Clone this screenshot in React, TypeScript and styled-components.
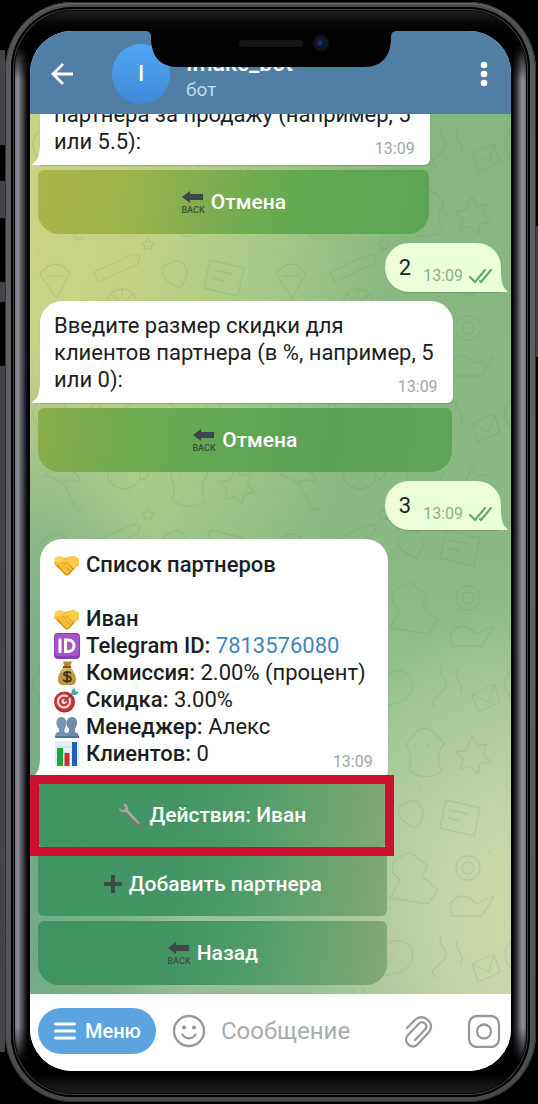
import React from "react";
import styled, { createGlobalStyle } from "styled-components";

const GlobalStyle = createGlobalStyle`
  *, *::before, *::after { box-sizing: border-box; }
  body {
    margin: 0;
    background: #000;
    font-family: Roboto, "Noto Sans", sans-serif;
    color: #1c1e20;
  }
  button, input { font: inherit; }
  svg { display: block; flex: none; }
`;

/* ---------- Phone body ---------- */

const Page = styled.div`
  position: relative;
  height: 100vh;
  min-height: 900px;
  padding: 2px 2px 2px 5px;
`;

const SideKey = styled.span<{ $top: number; $height: number; $right?: boolean; $slot?: boolean }>`
  position: absolute;
  top: ${(p) => p.$top}px;
  height: ${(p) => p.$height}px;
  width: ${(p) => (p.$right ? 3 : 5)}px;
  ${(p) => (p.$right ? "right: 0;" : "left: 0;")}
  background: ${(p) => (p.$slot ? "#020202" : "#434446")};
  border-radius: 1px;
`;

const Rim = styled.div`
  position: relative;
  height: 100%;
  padding: 5px 6px;
  border-radius: 68px;
  background: linear-gradient(to bottom, #4b4b4d 0, #5c5c60 80px, #626266 50%, #545458 calc(100% - 80px), #48484a 100%);
  box-shadow: inset 0 0 0 1px #2f3032, inset 0 2px 1px #77777a;
`;

const Band = styled.div`
  height: 100%;
  padding: 4px;
  border-radius: 62px;
  background: #060607;
  box-shadow: inset 0 0 0 2px #000, inset 0 0 0 3px #3d3e42, inset 0 0 0 4px #050506;
`;

const Bezel = styled.div`
  height: 100%;
  padding: 20px 15px 22px;
  border-radius: 58px;
  background:
    linear-gradient(to bottom, #1d1e20 0, #08080a 12px, #000 20px, #000 34px, transparent 70px),
    linear-gradient(to top, #1b1c1e 0, #111 10px, #000 20px, #000 30px, transparent 66px),
    linear-gradient(to right, #77787f 0, #8e9098 3px, #6d6e75 5px, #34353a 9px, #0a0a0b 12px, #000 14px, #000 calc(100% - 14px), #0a0a0b calc(100% - 13px), #3a3b40 calc(100% - 9px), #6f7077 calc(100% - 6px), #93949b calc(100% - 3px), #6a6b70 100%);
`;

const Screen = styled.main`
  position: relative;
  display: flex;
  flex-direction: column;
  height: 100%;
  overflow: hidden;
  border-radius: 42px;
  background: #fff;
`;

const NotchArea = styled.div`
  position: absolute;
  top: 0;
  left: 0;
  right: 0;
  display: flex;
  justify-content: center;
  pointer-events: none;
`;

/* ---------- Header ---------- */

const Header = styled.header`
  display: flex;
  align-items: center;
  flex: none;
  height: 83px;
  padding: 2px 19px 0 20px;
  background: #507ea5;
  color: #fff;
`;

const IconButton = styled.button`
  padding: 0;
  border: 0;
  background: none;
  color: inherit;
  cursor: pointer;
`;

const Avatar = styled.div`
  display: grid;
  place-items: center;
  width: 58px;
  height: 60px;
  margin: 0 16px 0 38px;
  border-radius: 50%;
  background: linear-gradient(#50a7f3, #3f89d8);
  font-size: 22px;
  font-weight: 500;
`;

const Identity = styled.div`
  flex: 1;
  padding-top: 6px;
`;

const BotName = styled.h1`
  margin: 0;
  font-size: 23px;
  line-height: 26px;
  font-weight: 500;
`;

const BotStatus = styled.p`
  margin: 0;
  font-size: 19px;
  line-height: 26px;
  color: #bcdcf2;
`;

/* ---------- Chat ---------- */

const Chat = styled.section`
  position: relative;
  display: flex;
  flex: 1;
  flex-direction: column;
  justify-content: flex-end;
  gap: 9px;
  min-height: 0;
  padding: 0 9px 9px 8px;
  overflow: hidden;
  background:
    radial-gradient(ellipse 46% 36% at 102% 92%, #ced8aa 0, rgba(206, 216, 170, 0.8) 35%, rgba(206, 216, 170, 0) 100%),
    radial-gradient(ellipse 34% 60% at 0 88%, #74ab84 0, rgba(116, 171, 132, 0.8) 50%, rgba(116, 171, 132, 0) 100%),
    radial-gradient(ellipse 82% 58% at -4% 12%, #ccd483 0, #c3d186 35%, rgba(180, 208, 142, 0.75) 62%, rgba(165, 200, 140, 0) 100%),
    linear-gradient(#85b67e 0, #88ba82 50%, #9fc898 82%, #98c096 100%);
`;

const Doodles = styled.svg`
  position: absolute;
  inset: 0;
  width: 100%;
  height: 100%;
`;

const Group = styled.div`
  position: relative;
  display: flex;
  flex: none;
  flex-direction: column;
  gap: 5px;
  width: fit-content;
`;

const Incoming = styled.article`
  position: relative;
  display: flex;
  flex-direction: column;
  margin-left: 2px;
  padding: 11px 19px 10px 14px;
  border-radius: 22px 22px 6px 0;
  background: #fff;
  box-shadow: 0 1px 1px rgba(70, 110, 60, 0.35);
  font-size: 22px;
  line-height: 27px;
  white-space: nowrap;
`;

const IncomingTail = styled.svg`
  position: absolute;
  left: -8px;
  bottom: 0;
`;

const Line = styled.p`
  display: flex;
  align-items: center;
  gap: 6px;
  min-height: 27px;
  margin: 0;

  b { font-weight: 500; }
`;

const ReportBody = styled.div`
  padding: 1px 3px 1px 0;
`;

const ProfileLink = styled.a`
  color: #3d87bd;
  text-decoration: none;
`;

const Time = styled.time`
  font-size: 16px;
  line-height: 20px;
  color: #a3a5a7;
`;

const IncomingTime = styled(Time)`
  align-self: flex-end;
  margin: -16px -4px -4px 0;
`;

const Outgoing = styled.article`
  position: relative;
  display: flex;
  flex: none;
  align-items: center;
  align-self: flex-end;
  height: 49px;
  margin-right: 1px;
  padding: 0 9px 0 14px;
  border-radius: 24px 24px 4px 24px;
  background: #ecfed8;
  box-shadow: 0 1px 1px rgba(70, 110, 60, 0.35);
  font-size: 22px;
`;

const OutgoingMeta = styled.span`
  display: flex;
  align-items: center;
  gap: 6px;
  margin: 16px 0 0 12px;

  time { color: #86b57c; }
`;

const OutgoingTail = styled.svg`
  position: absolute;
  right: -7px;
  bottom: 0;
`;

const tones = {
  olive: "linear-gradient(100deg, #abb54a 0, #9bb34b 25%, #7cad4f 45%, #62a951 66%, #5ea456 100%)",
  leaf: "linear-gradient(100deg, #8aad4a 0, #6fab50 22%, #62a854 42%, #5ba055 70%, #60a45a 100%)",
  forest: "linear-gradient(100deg, #3f9461 0, #439664 40%, #4f9c68 60%, #68a36d 80%, #83a974 100%)",
};

const KeyboardButton = styled.button<{ $tone: keyof typeof tones; $last?: boolean }>`
  display: flex;
  align-items: center;
  justify-content: center;
  gap: 6px;
  width: calc(100% - 1px);
  height: 64px;
  padding: 0;
  border: 0;
  border-radius: ${(p) => (p.$last ? "6px 6px 21px 21px" : "6px")};
  background: ${(p) => tones[p.$tone]};
  color: #fff;
  font-size: 21px;
  font-weight: 500;
  cursor: pointer;
`;

const Highlighted = styled.div`
  position: relative;

  &::after {
    content: "";
    position: absolute;
    inset: -8px -6px -9px -8px;
    border: 9px solid #cd1030;
    pointer-events: none;
  }
`;

/* ---------- Composer ---------- */

const Composer = styled.form`
  display: flex;
  align-items: center;
  flex: none;
  height: 77px;
  padding: 0 10px 3px 8px;
  background: #fff;
  color: #96999c;
`;

const MenuButton = styled.button`
  display: flex;
  align-items: center;
  gap: 9px;
  height: 46px;
  margin-right: 16px;
  padding: 0 15px 0 16px;
  border: 0;
  border-radius: 23px;
  background: #5ba4df;
  color: #fff;
  font-size: 20px;
  font-weight: 500;
  cursor: pointer;
`;

const MessageInput = styled.input`
  flex: 1;
  min-width: 0;
  margin: 0 12px 0 15px;
  padding: 0;
  border: 0;
  outline: 0;
  background: none;
  font-size: 24px;

  &::placeholder { color: #a9abad; opacity: 1; }
`;

const ComposerActions = styled.div`
  display: flex;
  gap: 33px;
`;

/* ---------- Drawings ---------- */

const Handshake = () => (
  <svg width="26" height="26" viewBox="0 0 26 26" aria-hidden="true">
    <path d="M1 6 6 4l4 2 4-1 6-1 5 3v6l-4 3-6 6c-1 1-3 1-4 0l-7-6-4-4z" fill="#f6bd35" />
    <path d="M1 6 6 4l4 2-3 5-6-1z" fill="#ffd15a" />
    <path d="M14 6 9 10c0 2 3 2 5 0l7 6 4-3V7l-5-3z" fill="#fccb48" />
    <path d="m3 13 8 9c1 1 3 1 4 0l5-6" fill="none" stroke="#d98c1c" strokeWidth="1.3" />
    <path d="m12 15 4 4m-1-6 4 4M9 10c0 2 3 2 5 0" fill="none" stroke="#dc9824" strokeWidth="1" />
  </svg>
);

const IdBadge = () => (
  <svg width="26" height="26" viewBox="0 0 26 26" aria-hidden="true">
    <rect width="26" height="26" rx="4" fill="#8a3fae" />
    <rect x="1" y="1" width="24" height="22" rx="4" fill="#a855cc" />
    <path d="M6 5.500V20M11.500 7v11.500H14c8 0 8-11.500 0-11.500z" fill="none" stroke="#fff" strokeWidth="3" />
  </svg>
);

const MoneyBag = () => (
  <svg width="26" height="26" viewBox="0 0 26 26" aria-hidden="true">
    <path d="M9 2c2-2 3 1 4-1 1 2 3-1 5 1l-3 6h-4z" fill="#b28a35" />
    <path d="M10 7h6c3 3 6 8 6 13 0 3-2 5-5 5H9c-3 0-5-2-5-5 0-5 3-10 6-13z" fill="#bd973f" />
    <path d="M10 7h6c2 2 3 4 4 7-5-4-9-4-14 0 1-3 2-5 4-7z" fill="#d3b05b" />
    <path d="M9 7h8" stroke="#7b5a1c" strokeWidth="2" />
    <path d="M17 13c-3-2-7-1-7 1 0 3 7 1 7 5 0 3-5 3-8 1M13 11v12" fill="none" stroke="#40351c" strokeWidth="1.700" />
  </svg>
);

const Target = () => (
  <svg width="26" height="26" viewBox="0 0 26 26" aria-hidden="true">
    <circle cx="10.500" cy="15" r="10.500" fill="#b52a30" />
    <circle cx="10" cy="14.500" r="9" fill="#d8383c" />
    <circle cx="10" cy="14.500" r="7" fill="#f6e8e6" />
    <circle cx="10" cy="14.500" r="5" fill="#d23438" />
    <circle cx="10" cy="14.500" r="2.500" fill="#f4e3e0" />
    <path d="M10 14.500 19 6" stroke="#7a3238" strokeWidth="1.600" />
    <path d="m17 8 1-5 3-2v3l4 1-3 3z" fill="#4da8a6" />
  </svg>
);

const Busts = () => (
  <svg width="26" height="26" viewBox="0 0 26 26" aria-hidden="true">
    <path d="M11 24c0-4 1-5 4-6v-3c-5-6-2-12 3-12s7 6 3 12v3c3 1 4 2 4 6z" fill="#6c8ca8" />
    <path d="M1 24c0-4 1-6 4-6v-3C0 9 3 3 7.500 3s7 6 3 12v3c3 1 4 2 4 6z" fill="#7595b1" />
    <path d="M1 22h24v2H1z" fill="#527390" />
  </svg>
);

const BarChart = () => (
  <svg width="26" height="26" viewBox="0 0 26 26" aria-hidden="true">
    <path d="M1 0h24v25H1z" fill="#e6eef5" />
    <path d="M1 6h24M1 12h24M1 18h24" stroke="#cbd9e4" />
    <path d="M3 7h6v18H3z" fill="#19a83a" />
    <path d="M10.500 12h5v13h-5z" fill="#c82c31" />
    <path d="M18 1h5v24h-5z" fill="#2162b8" />
  </svg>
);

const Wrench = () => (
  <svg width="25" height="25" viewBox="0 0 25 25" aria-hidden="true">
    <path d="M5 1c3-1 6 2 5 6l13 14c1 2-1 4-3 3L7 10C3 11 0 8 1 5l4 2 2-2z" fill="#747a73" />
    <path d="M5 1c3-1 6 2 5 6l12 13-2 1L8 9C4 10 1 8 1 5l4 2.500L7.500 5z" fill="#a4aaa2" />
  </svg>
);

const Plus = () => (
  <svg width="20" height="20" viewBox="0 0 20 20" aria-hidden="true">
    <path d="M10 1v18M1 10h18" stroke="#3f4944" strokeWidth="4" />
  </svg>
);

const BackMark = () => (
  <svg width="24" height="24" viewBox="0 0 24 24" aria-hidden="true">
    <path d="M1 7 9 1v3h13v6H9v3z" fill="#3e4649" />
    <text x="12" y="23" textAnchor="middle" fontFamily="Roboto, sans-serif" fontSize="9" fill="#3e4c45">BACK</text>
  </svg>
);

const Checks = () => (
  <svg width="23" height="16" viewBox="0 0 23 16" fill="none" stroke="#57a860" strokeWidth="2" strokeLinecap="round" aria-hidden="true">
    <path d="m1 9 5 5L16 2M11 13l1 1L22 2" />
  </svg>
);

const Doodle = () => (
  <Doodles aria-hidden="true">
    <defs>
      <pattern id="doodles" width="236" height="270" patternUnits="userSpaceOnUse">
        <g fill="none" stroke="#47804a" strokeOpacity="0.15" strokeWidth="1.300" strokeLinejoin="round">
          <circle cx="20" cy="30" r="17" />
          <path d="M12 34q8 9 17-1M14 25v2m10-3v2" />
          <path d="m66 16 4 8 9 1-6 6 2 9-9-4-8 4 1-9-6-6 9-1z" />
          <path d="M98 44c-12-20 8-34 24-24 12-10 32 4 22 20-8 12-36 16-46 4zM112 30v2m14-2v2m-10 6q5 3 9-1" />
          <path d="M176 12c-8 8 10 14 2 24s-16 8-8 18m22-38c-8 8 10 14 2 24" />
          <path d="m206 40 22-10 6 18-22 10zM206 40l17 8 5-18" />
          <path d="M14 92c14-14 34-8 36 6-10-4-14-2-18 2-6-6-12-8-18-8zM33 99l12 24q4 6 8 0" />
          <path d="M78 80h32v16q-16 18-32 0zM110 84q12-2 8 8-2 4-10 4M86 72q4-4 0-8m10 8q4-4 0-8" />
          <path d="M140 92q18-34 38-2-10 12-2 28-20 10-34-2 6-12-2-24zM150 90v3m12-3v3" />
          <path d="m206 82 5 10 10-2-4 10 8 8-11 2-2 10-8-8-10 4 3-11-8-7 11-2z" />
          <path d="M10 160q16-20 30 0l-14 24zM16 162h18M104 140l-40 18 4 10 40-18 2-8z" />
          <circle cx="92" cy="190" r="15" />
          <path d="M92 175v30m-15-15h30m-26-10 22 20m0-20-22 20" />
          <path d="M140 150c10-10 26 6 10 24-22-8-22-24-10-24zM180 146l34 8-6 28-34-8zM184 156l18 4m-20 4 12 3" />
          <path d="M28 212c-16 8-18 24-8 34 18-2 24-16 8-34zM20 232h10M60 222q20-14 34 4l-6 20H64z" />
          <path d="m128 206 16-8 18 14-6 10 16 14-10 14-38-6 10-18-8-8z" />
          <circle cx="202" cy="214" r="12" />
          <circle cx="202" cy="214" r="6" />
          <path d="M184 250q12-16 26 0l18-8-12 20h-30z" />
          <path d="m118 124 2 4 4 1-3 3 1 4-4-2-4 2 1-4-3-3 4-1zM54 60v3m100 70v3m70 60v3m-170-8v3m60-100v3M8 136v3m116 114v3" />
        </g>
      </pattern>
    </defs>
    <rect width="100%" height="100%" fill="url(#doodles)" />
  </Doodles>
);

const TailLeft = () => (
  <IncomingTail width="9" height="22" viewBox="0 0 9 22" aria-hidden="true">
    <path d="M8 0h1v22H1c-1 0-1-1 0-1.500C6 17 8 12 8 0z" fill="#fff" />
  </IncomingTail>
);

const TailRight = () => (
  <OutgoingTail width="9" height="22" viewBox="0 0 9 22" aria-hidden="true">
    <path d="M2 0H0v22h8c1 0 1-1 0-1.500C4 18 2 13 2 0z" fill="#ecfed8" />
  </OutgoingTail>
);

const Notch = () => (
  <NotchArea>
    <svg width="252" height="37" viewBox="0 0 252 37" aria-hidden="true">
      <path d="M0 0c4 0 6 2 6 6 0 18 8 30 27 30h186c19 0 27-12 27-30 0-4 2-6 6-6z" fill="#020203" />
      <rect x="94" y="9" width="64" height="7" rx="3.500" fill="#141517" />
      <circle cx="176" cy="12" r="8" fill="#11121a" />
      <circle cx="176" cy="12" r="5" fill="#10153c" />
      <circle cx="175" cy="12" r="2.500" fill="#1f2a6c" />
    </svg>
  </NotchArea>
);

/* ---------- Page ---------- */

const Reply = ({ children }: { children: React.ReactNode }) => (
  <Outgoing>
    {children}
    <OutgoingMeta>
      <Time>13:09</Time>
      <Checks />
    </OutgoingMeta>
    <TailRight />
  </Outgoing>
);

const facts = [
  { icon: <MoneyBag />, label: "Комиссия:", value: "2.00% (процент)" },
  { icon: <Target />, label: "Скидка:", value: "3.00%" },
  { icon: <Busts />, label: "Менеджер:", value: "Алекс" },
  { icon: <BarChart />, label: "Клиентов:", value: "0" },
];

export default function App() {
  return (
    <>
      <GlobalStyle />
      <Page>
        <SideKey $top={50} $height={1002} />
        <SideKey $top={145} $height={36} $slot />
        <SideKey $top={218} $height={64} $slot />
        <SideKey $top={302} $height={64} $slot />
        <SideKey $top={226} $height={131} $right />
        <Rim>
          <Band>
            <Bezel>
              <Screen>
                <Header>
                  <IconButton aria-label="Назад">
                    <svg width="24" height="24" viewBox="0 0 24 24" fill="none" stroke="#fff" strokeWidth="2.800">
                      <path d="M23 12H3M13 2 3 12l10 10" />
                    </svg>
                  </IconButton>
                  <Avatar>I</Avatar>
                  <Identity>
                    <BotName>Imake_bot</BotName>
                    <BotStatus>бот</BotStatus>
                  </Identity>
                  <IconButton aria-label="Ещё">
                    <svg width="16" height="26" viewBox="0 0 16 26" fill="#fff">
                      <circle cx="8" cy="4" r="3.300" />
                      <circle cx="8" cy="13" r="3.300" />
                      <circle cx="8" cy="22" r="3.300" />
                    </svg>
                  </IconButton>
                </Header>

                <Chat>
                  <Doodle />
                  <Group>
                    <Incoming>
                      <Line>партнера за продажу (например, 5</Line>
                      <Line>или 5.5):</Line>
                      <IncomingTime>13:09</IncomingTime>
                      <TailLeft />
                    </Incoming>
                    <KeyboardButton $tone="olive" $last><BackMark />Отмена</KeyboardButton>
                  </Group>

                  <Reply>2</Reply>

                  <Group>
                    <Incoming>
                      <Line>Введите размер скидки для</Line>
                      <Line>клиентов партнера (в %, например, 5</Line>
                      <Line>или 0):</Line>
                      <IncomingTime>13:09</IncomingTime>
                      <TailLeft />
                    </Incoming>
                    <KeyboardButton $tone="leaf" $last><BackMark />Отмена</KeyboardButton>
                  </Group>

                  <Reply>3</Reply>

                  <Group>
                    <Incoming>
                      <ReportBody>
                        <Line><Handshake /><b>Список партнеров</b></Line>
                        <Line />
                        <Line><Handshake /><b>Иван</b></Line>
                        <Line>
                          <IdBadge />
                          <span><b>Telegram ID:</b> <ProfileLink href="#profile">7813576080</ProfileLink></span>
                        </Line>
                        {facts.map((fact) => (
                          <Line key={fact.label}>
                            {fact.icon}
                            <span><b>{fact.label}</b> {fact.value}</span>
                          </Line>
                        ))}
                      </ReportBody>
                      <IncomingTime>13:09</IncomingTime>
                      <TailLeft />
                    </Incoming>
                    <Highlighted>
                      <KeyboardButton $tone="forest"><Wrench />Действия: Иван</KeyboardButton>
                    </Highlighted>
                    <KeyboardButton $tone="forest"><Plus />Добавить партнера</KeyboardButton>
                    <KeyboardButton $tone="forest" $last><BackMark />Назад</KeyboardButton>
                  </Group>
                </Chat>

                <Composer onSubmit={(event) => event.preventDefault()}>
                  <MenuButton type="button">
                    <svg width="22" height="20" viewBox="0 0 22 20" stroke="#fff" strokeWidth="3" strokeLinecap="round">
                      <path d="M1.500 3h19M1.500 10h19M1.500 17h19" />
                    </svg>
                    Меню
                  </MenuButton>
                  <IconButton type="button" aria-label="Эмодзи">
                    <svg width="34" height="34" viewBox="0 0 34 34" fill="none" stroke="currentColor" strokeWidth="2.300" strokeLinecap="round">
                      <circle cx="17" cy="17" r="15" />
                      <path d="M10.500 20.500c3 5 10 5 13 0" />
                      <circle cx="12" cy="13.500" r="1.300" fill="currentColor" strokeWidth="1.500" />
                      <circle cx="22" cy="13.500" r="1.300" fill="currentColor" strokeWidth="1.500" />
                    </svg>
                  </IconButton>
                  <MessageInput aria-label="Сообщение" placeholder="Сообщение" />
                  <ComposerActions>
                    <IconButton type="button" aria-label="Прикрепить файл">
                      <svg width="30" height="34" viewBox="0 0 30 34" fill="none" stroke="currentColor" strokeWidth="2.300" strokeLinecap="round">
                        <path d="M3 13 11 5C19-3 32 8 25 17L14 29C8 36-2 27 4 20L15 8.500C19 5 25 10 21 14.500L11 25" transform="translate(0 1)" />
                      </svg>
                    </IconButton>
                    <IconButton type="button" aria-label="Видеосообщение">
                      <svg width="34" height="34" viewBox="0 0 34 34" fill="none" stroke="currentColor" strokeWidth="2.300">
                        <rect x="2" y="2" width="30" height="31" rx="8" />
                        <circle cx="17" cy="17.500" r="7" />
                      </svg>
                    </IconButton>
                  </ComposerActions>
                </Composer>
                <Notch />
              </Screen>
            </Bezel>
          </Band>
        </Rim>
      </Page>
    </>
  );
}
